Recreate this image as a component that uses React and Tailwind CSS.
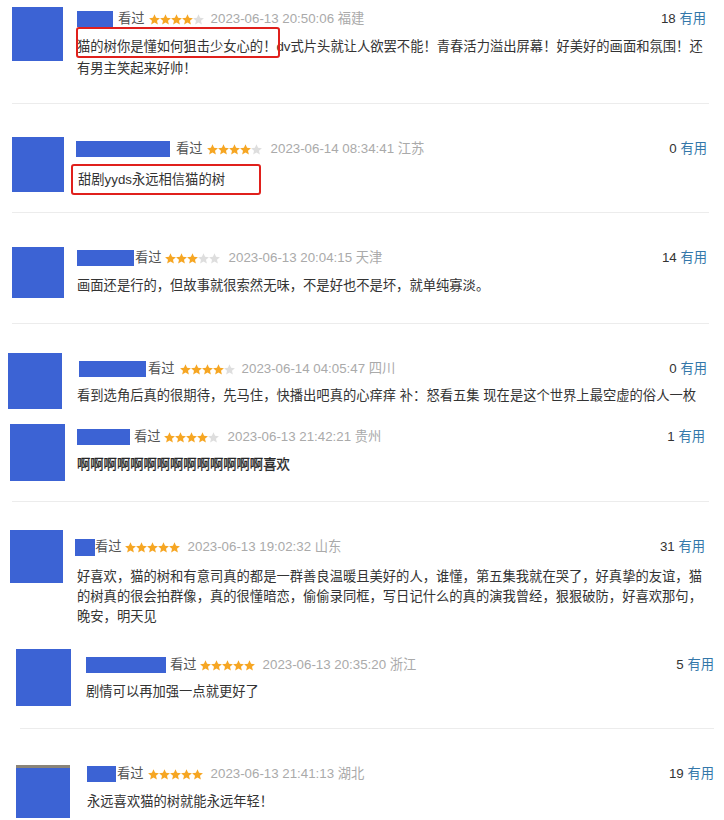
import React from "react";

// -----------------------------
// STAR ROW
// -----------------------------
function Stars({ n }) {
  return (
    <span className="flex items-center">
      {[0, 1, 2, 3, 4].map((i) => (
        <svg key={i} width="11" height="11" viewBox="1 1.5 22 21">
          <polygon
            points="12,1.5 15.1,8.6 22.8,9.3 17,14.4 18.7,22 12,18 5.3,22 7,14.4 1.2,9.3 8.9,8.6"
            fill={i < n ? "#f6a623" : "#dedede"}
          />
        </svg>
      ))}
    </span>
  );
}

// -----------------------------
// ONE COMMENT
// -----------------------------
function Comment({ c }) {
  return (
    <div className={`relative flex ${c.box}`}>
      <div className={`shrink-0 bg-[#3c63d4] ${c.avatar}`} />
      <div className={`flex flex-1 flex-col ${c.body}`}>
        <div className={`flex h-[18px] items-center ${c.head}`}>
          <span className={`h-[16px] bg-[#3c63d4] ${c.name}`} />
          <span className={`text-[#555] ${c.seen}`}>看过</span>
          <span className={c.starGap}>
            <Stars n={c.stars} />
          </span>
          <span className={`text-[#aaa] ${c.timeGap}`}>
            {c.time} {c.place}
          </span>
          <span className="ml-auto text-[#333]">
            {c.votes} <span className="text-[#3377aa]">有用</span>
          </span>
        </div>
        <div className={`leading-[20px] text-[#333] ${c.textGap}`}>
          {c.lines.map((l, i) => (
            <div key={i} className="whitespace-nowrap">
              {l}
            </div>
          ))}
        </div>
      </div>
      {c.line && <div className={`absolute h-px bg-[#ececec] ${c.line}`} />}
      {c.red && (
        <div
          className={`absolute rounded-[3px] border-2 border-[#e0201c] ${c.red}`}
        />
      )}
    </div>
  );
}

const comments = [
  {
    box: "h-[104px]",
    avatar: "ml-[12px] mt-[7px] w-[51px] h-[54px]",
    body: "ml-[14px] mr-[18px]",
    head: "mt-[10px]",
    name: "w-[36px]",
    seen: "ml-[5px]",
    starGap: "ml-[4px]",
    timeGap: "ml-[7px]",
    stars: 4,
    time: "2023-06-13 20:50:06",
    place: "福建",
    votes: 18,
    textGap: "mt-[8px] leading-[22px]",
    lines: [
      "猫的树你是懂如何狙击少女心的！dv式片头就让人欲罢不能！青春活力溢出屏幕！好美好的画面和氛围！还",
      "有男主笑起来好帅！",
    ],
    line: "left-[12px] right-[15px] bottom-0",
    red: "left-[76px] top-[27px] w-[204px] h-[31px]",
  },
  {
    box: "h-[109px]",
    avatar: "ml-[12px] mt-[33px] w-[52px] h-[55px]",
    body: "ml-[12px] mr-[17px]",
    head: "mt-[36px]",
    name: "w-[94px]",
    seen: "ml-[6px]",
    starGap: "ml-[4px]",
    timeGap: "ml-[9px]",
    stars: 4,
    time: "2023-06-14 08:34:41",
    place: "江苏",
    votes: 0,
    textGap: "mt-[12px] ml-[2px]",
    lines: ["甜剧yyds永远相信猫的树"],
    line: "left-[12px] right-[15px] bottom-0",
    red: "left-[71px] top-[60px] w-[190px] h-[31px]",
  },
  {
    box: "h-[111px]",
    avatar: "ml-[12px] mt-[34px] w-[52px] h-[51px]",
    body: "ml-[13px] mr-[17px]",
    head: "mt-[36px]",
    name: "w-[57px]",
    seen: "ml-[1px]",
    starGap: "ml-[3px]",
    timeGap: "ml-[9px]",
    stars: 3,
    time: "2023-06-13 20:04:15",
    place: "天津",
    votes: 14,
    textGap: "mt-[9px]",
    lines: ["画面还是行的，但故事就很索然无味，不是好也不是坏，就单纯寡淡。"],
    line: "left-[12px] right-[15px] bottom-0",
  },
  {
    box: "h-[93px]",
    avatar: "ml-[8px] mt-[29px] w-[54px] h-[56px]",
    body: "ml-[17px] mr-[17px]",
    head: "mt-[36px]",
    name: "w-[67px]",
    seen: "ml-[2px]",
    starGap: "ml-[5px]",
    timeGap: "ml-[7px]",
    stars: 4,
    time: "2023-06-14 04:05:47",
    place: "四川",
    votes: 0,
    textGap: "mt-[8px] -ml-[2px]",
    lines: [
      "看到选角后真的很期待，先马住，快播出吧真的心痒痒 补：怒看五集 现在是这个世界上最空虚的俗人一枚",
    ],
  },
  {
    box: "h-[85px]",
    avatar: "ml-[10px] mt-[7px] w-[55px] h-[57px]",
    body: "ml-[12px] mr-[19px]",
    head: "mt-[11px]",
    name: "w-[53px]",
    seen: "ml-[4px]",
    starGap: "ml-[3px]",
    timeGap: "ml-[9px]",
    stars: 4,
    time: "2023-06-13 21:42:21",
    place: "贵州",
    votes: 1,
    textGap: "mt-[9px] !text-[#222] [-webkit-text-stroke:0.3px_#222]",
    lines: ["啊啊啊啊啊啊啊啊啊啊啊啊啊啊喜欢"],
    line: "left-[12px] right-[15px] bottom-0",
  },
  {
    box: "h-[134px]",
    avatar: "ml-[10px] mt-[28px] w-[53px] h-[53px]",
    body: "ml-[12px] mr-[19px]",
    head: "mt-[36px]",
    name: "w-[20px] h-[17px]",
    seen: "ml-0",
    starGap: "ml-[3px]",
    timeGap: "ml-[8px]",
    stars: 5,
    time: "2023-06-13 19:02:32",
    place: "山东",
    votes: 31,
    textGap: "mt-[11px] ml-[2px]",
    lines: [
      "好喜欢，猫的树和有意司真的都是一群善良温暖且美好的人，谁懂，第五集我就在哭了，好真挚的友谊，猫",
      "的树真的很会拍群像，真的很懂暗恋，偷偷录同框，写日记什么的真的演我曾经，狠狠破防，好喜欢那句，",
      "晚安，明天见",
    ],
  },
  {
    box: "h-[93px]",
    avatar: "ml-[16px] mt-[13px] w-[55px] h-[57px]",
    body: "ml-[15px] mr-[10px]",
    head: "mt-[20px]",
    name: "w-[80px] h-[14px]",
    seen: "ml-[4px]",
    starGap: "ml-[3px]",
    timeGap: "ml-[8px]",
    stars: 5,
    time: "2023-06-13 20:35:20",
    place: "浙江",
    votes: 5,
    textGap: "mt-[8px]",
    lines: ["剧情可以再加强一点就更好了"],
    line: "left-[20px] right-[10px] bottom-0",
  },
  {
    box: "h-[91px]",
    avatar: "ml-[16px] mt-[36px] w-[54px] h-[53px] border-t-[3px] border-[#8a8478]",
    body: "ml-[17px] mr-[10px]",
    head: "mt-[36px]",
    name: "w-[29px] h-[13px]",
    seen: "ml-[1px]",
    starGap: "ml-[4px]",
    timeGap: "ml-[8px]",
    stars: 5,
    time: "2023-06-13 21:41:13",
    place: "湖北",
    votes: 19,
    textGap: "mt-[9px]",
    lines: ["永远喜欢猫的树就能永远年轻！"],
  },
];

export default function App() {
  return (
    <div className="h-[820px] w-[724px] overflow-hidden bg-white font-['Liberation_Sans','Noto_Sans_CJK_SC',sans-serif] text-[13.3px]">
      {comments.map((c, i) => (
        <Comment key={i} c={c} />
      ))}
    </div>
  );
}
